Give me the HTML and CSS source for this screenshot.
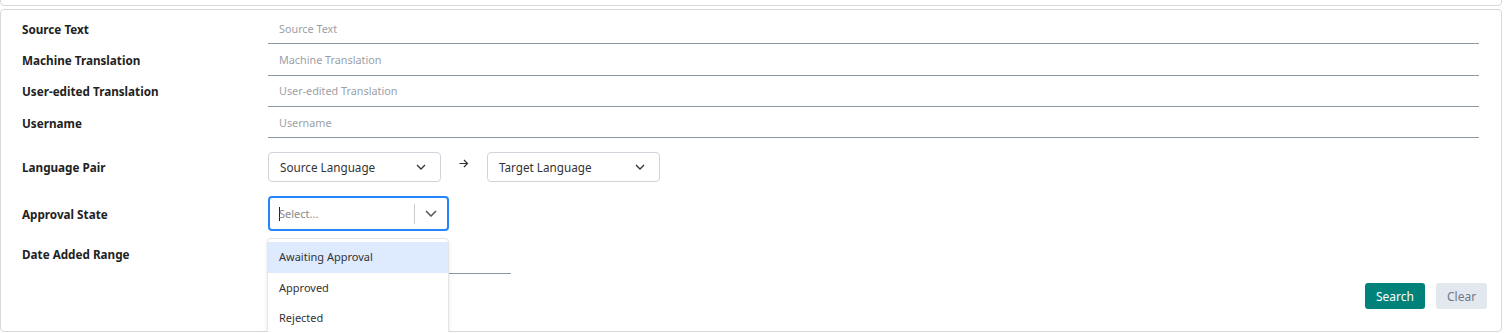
FILE: index.html
```html
<!DOCTYPE html>
<html>
<head>
    <meta charset="UTF-8">
    <title>Translation Search</title>
    <link rel="stylesheet" href="styles.css">
</head>
<body>

    <div class="top-card"></div>

    <form class="panel">
        <div class="row text-row">
            <label class="label">Source Text</label>
            <input class="line-input" placeholder="Source Text">
        </div>
        <div class="row text-row">
            <label class="label">Machine Translation</label>
            <input class="line-input" placeholder="Machine Translation">
        </div>
        <div class="row text-row">
            <label class="label">User-edited Translation</label>
            <input class="line-input" placeholder="User-edited Translation">
        </div>
        <div class="row text-row">
            <label class="label">Username</label>
            <input class="line-input" placeholder="Username">
        </div>

        <div class="row pair-row">
            <label class="label">Language Pair</label>
            <div class="pair">
                <div class="select-box">
                    <span>Source Language</span>
                    <svg class="chevron" width="10" height="6" viewBox="0 0 10 6"><path d="M1 1l4 4 4-4" fill="none" stroke="#333" stroke-width="1.3"/></svg>
                </div>
                <svg class="pair-arrow" width="10" height="9" viewBox="0 0 10 9"><path d="M0.5 4.5h8M5 1l3.5 3.5L5 8" fill="none" stroke="#333" stroke-width="1.2"/></svg>
                <div class="select-box">
                    <span>Target Language</span>
                    <svg class="chevron" width="10" height="6" viewBox="0 0 10 6"><path d="M1 1l4 4 4-4" fill="none" stroke="#333" stroke-width="1.3"/></svg>
                </div>
            </div>
        </div>

        <div class="row state-row">
            <label class="label">Approval State</label>
            <div class="combo">
                <div class="control">
                    <span class="caret"></span>
                    <span class="combo-placeholder">Select...</span>
                    <span class="separator"></span>
                    <svg class="chevron" width="12" height="7" viewBox="0 0 12 7"><path d="M1 1l5 5 5-5" fill="none" stroke="#555" stroke-width="1.5"/></svg>
                </div>
                <div class="menu">
                    <div class="option focused">Awaiting Approval</div>
                    <div class="option">Approved</div>
                    <div class="option">Rejected</div>
                </div>
            </div>
        </div>

        <div class="row date-row">
            <label class="label">Date Added Range</label>
            <input class="line-input date-input" placeholder="Select start date - Select end date">
        </div>

        <div class="actions">
            <button type="button" class="btn search">Search</button>
            <button type="button" class="btn clear">Clear</button>
        </div>
    </form>

</body>
</html>
```

FILE: styles.css
```css
body {
    margin: 0;
    padding: 0;
    font-family: "Noto Sans", "Open Sans", sans-serif;
    color: #222;
    background: #ffffff;
}

.top-card {
    width: 1500px;
    height: 4px;
    margin-top: -10px;
    padding-top: 10px;
    border: 1px solid #d5d9de;
    border-radius: 4px;
}

.panel {
    width: 1502px;
    box-sizing: border-box;
    margin-top: 3px;
    padding: 3px 22px 22px 21px;
    border: 1px solid #d5d9de;
    border-radius: 4px;
}

.row {
    display: flex;
    align-items: center;
}

.label {
    width: 246px;
    flex-shrink: 0;
    font-size: 11.7px;
    font-weight: bold;
    line-height: 16px;
    color: #222;
}

.text-row {
    height: 31.3px;
}

.line-input {
    flex: 1;
    height: 100%;
    box-sizing: border-box;
    border: none;
    border-bottom: 1px solid #8d98a5;
    padding: 0 0 0 11px;
    font-family: inherit;
    font-size: 10.8px;
    color: #333;
    outline: none;
    background: transparent;
}

.line-input::placeholder {
    color: #9a9fa6;
}

.pair-row {
    margin-top: 14px;
    height: 30px;
}

.pair {
    display: flex;
    align-items: center;
}

.select-box {
    width: 173px;
    height: 30px;
    box-sizing: border-box;
    border: 1px solid #cfd4da;
    border-radius: 4px;
    padding: 0 14px 0 11px;
    display: flex;
    align-items: center;
    justify-content: space-between;
    font-size: 11.7px;
    color: #333;
}

.pair-arrow {
    margin: 0 18px 8px 18px;
}

.state-row {
    margin-top: 14px;
    height: 35px;
}

.combo {
    position: relative;
}

.control {
    width: 181px;
    height: 35px;
    box-sizing: border-box;
    border: 2px solid #2684ff;
    border-radius: 4px;
    display: flex;
    align-items: center;
    padding: 0 10px 0 9px;
}

.caret {
    width: 1px;
    height: 14px;
    background: #222;
}

.combo-placeholder {
    flex: 1;
    font-size: 11px;
    color: #8a8a8a;
    margin-left: -1px;
}

.separator {
    width: 1px;
    height: 20px;
    background: #cccccc;
    margin-right: 10px;
}

.menu {
    position: absolute;
    top: 42px;
    left: -1px;
    width: 182px;
    box-sizing: border-box;
    padding-top: 3px;
    background: #ffffff;
    border: 1px solid #e2e4e7;
    border-radius: 4px;
    box-shadow: 0 2px 4px rgba(0, 0, 0, 0.08);
    z-index: 2;
}

.option {
    height: 30.5px;
    line-height: 30.5px;
    padding-left: 11px;
    font-size: 11px;
    color: #333;
}

.option.focused {
    background: #deebff;
}

.date-row {
    margin-top: 9px;
    height: 34px;
    align-items: flex-start;
}

.date-row .label {
    padding-top: 6px;
}

.date-input {
    flex: none;
    width: 243px;
    padding-left: 11px;
}

.actions {
    display: flex;
    justify-content: flex-end;
    margin-top: 9px;
    margin-right: -8px;
}

.btn {
    height: 26px;
    border: none;
    border-radius: 3px;
    font-family: inherit;
    font-size: 12px;
    padding: 0 11px;
    cursor: pointer;
}

.search {
    width: 60px;
    background-color: #00827b;
    color: #ffffff;
    margin-right: 11px;
}

.clear {
    width: 51px;
    background-color: #e3e8ef;
    color: #6e7887;
}
```
